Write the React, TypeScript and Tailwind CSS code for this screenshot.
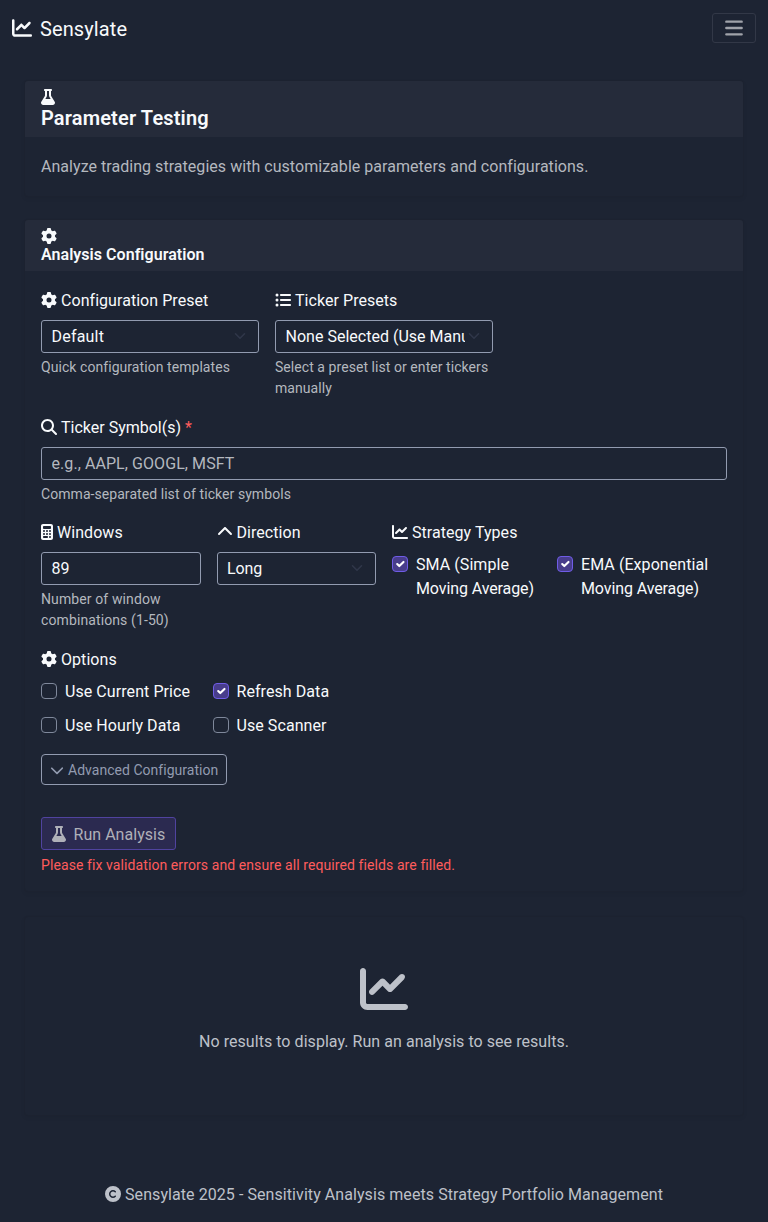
import type { ReactNode } from 'react';
import {
  FaCalculator,
  FaChartLine,
  FaChevronDown,
  FaChevronUp,
  FaCopyright,
  FaFlask,
  FaGear,
  FaListUl,
  FaMagnifyingGlass,
} from 'react-icons/fa6';

function Label({ icon, children }: { icon: ReactNode; children: ReactNode }) {
  return (
    <div className="mb-2 flex h-6 items-center gap-1 whitespace-nowrap">
      {icon}
      <span className="pt-0.5 tracking-[0.05px]">{children}</span>
    </div>
  );
}

function Hint({ children }: { children: ReactNode }) {
  return <p className="mt-1 text-sm leading-[21px] tracking-[0.06px] text-[#b4b8bf]">{children}</p>;
}

function Select({ children }: { children: ReactNode }) {
  return (
    <div className="flex h-[32.5px] items-center rounded-[3px] border border-[#929bb0] pr-3 pl-[9.5px]">
      <span className="min-w-0 flex-1 overflow-hidden leading-6 whitespace-nowrap">{children}</span>
      <svg viewBox="0 0 16 16" className="ml-[3px] size-3 shrink-0 fill-none stroke-[#30374a] stroke-2">
        <path d="m2 5 6 6 6-6" strokeLinecap="round" strokeLinejoin="round" />
      </svg>
    </div>
  );
}

function Check({ checked = false, children }: { checked?: boolean; children: ReactNode }) {
  return (
    <label className="flex gap-2">
      <span
        className={
          checked
            ? 'mt-[3.5px] flex size-4 shrink-0 items-center justify-center rounded-[4px] border border-[#6f5ce6] bg-[#483d8b]'
            : 'mt-[3.5px] size-4 shrink-0 rounded-[4px] border border-[#7f889b]'
        }
      >
        {checked && (
          <svg viewBox="0 0 20 20" className="size-3.5 shrink-0 fill-none stroke-white stroke-3">
            <path d="m6 10 3 3 6-6" strokeLinecap="round" strokeLinejoin="round" />
          </svg>
        )}
      </span>
      <span className="whitespace-nowrap">{children}</span>
    </label>
  );
}

function Card({ className, children }: { className: string; children: ReactNode }) {
  return (
    <section
      className={`mx-6 rounded-[4px] border border-[#1c2230] bg-[#1d2433] shadow-[0_2px_4px_rgba(0,0,0,0.05)] ${className}`}
    >
      {children}
    </section>
  );
}

export default function App() {
  return (
    <div className="flex h-[1222px] w-[768px] flex-col bg-[#1d2433] font-['Roboto',sans-serif] text-base leading-6 tracking-[0.07px] text-[#f8fafc]">
      <nav className="flex h-14 items-center justify-between px-3">
        <div className="flex items-center gap-2 text-xl leading-[30px] tracking-[0.1px]">
          <FaChartLine className="size-5" />
          <span className="pt-0.5">Sensylate</span>
        </div>
        <button className="flex h-[30px] w-11 items-center justify-center rounded-[3px] border border-[#323847]">
          <svg viewBox="0 0 30 30" className="size-5 fill-none stroke-[#a0a3aa] stroke-[3.6]">
            <path d="M3.5 5.5h23M3.5 15h23M3.5 24.5h23" strokeLinecap="round" />
          </svg>
        </button>
      </nav>

      <Card className="mt-6 h-[117px]">
        <header className="h-14 rounded-t-[3px] bg-[#252b3a] px-4 pt-2">
          <FaFlask className="h-4 w-3.5" />
          <h1 className="pt-px text-xl leading-6 font-semibold tracking-[0.15px]">Parameter Testing</h1>
        </header>
        <p className="mt-[18px] px-4 tracking-[0.04px] text-[#b4b8bf]">
          Analyze trading strategies with customizable parameters and configurations.
        </p>
      </Card>

      <Card className="mt-[22px] h-[673px]">
        <header className="h-[51px] rounded-t-[3px] bg-[#252b3a] px-4 pt-2">
          <FaGear className="size-4" />
          <h2 className="pt-px leading-5 font-semibold tracking-[0.04px]">Analysis Configuration</h2>
        </header>
        <div className="px-4 pt-[17px]">
          <div className="grid h-[127px] grid-cols-[218px_218px] items-start gap-4">
            <div>
              <Label icon={<FaGear className="size-4" />}>Configuration Preset</Label>
              <Select>
                <span className="block pt-0.5 tracking-[0.2px]">Default</span>
              </Select>
              <Hint>Quick configuration templates</Hint>
            </div>
            <div>
              <Label icon={<FaListUl className="size-4" />}>Ticker Presets</Label>
              <Select>
                <span className="block pt-0.5 tracking-[0.01px]">None Selected (Use Manual Entry)</span>
              </Select>
              <Hint>Select a preset list or enter tickers manually</Hint>
            </div>
          </div>

          <div className="h-[105px]">
            <Label icon={<FaMagnifyingGlass className="size-4" />}>
              <span className="tracking-normal">Ticker Symbol(s)</span> <span className="text-[#ff5c5c]">*</span>
            </Label>
            <input
              className="-mt-[0.5px] block h-[33px] w-full rounded-[3px] border border-[#929bb0] bg-transparent px-[9.5px] tracking-[0.07px] placeholder:text-[#b4b8bf]"
              placeholder="e.g., AAPL, GOOGL, MSFT"
            />
            <Hint>Comma-separated list of ticker symbols</Hint>
          </div>

          <div className="grid h-[127px] grid-cols-[159.5px_159.5px_335px] items-start gap-x-4">
            <div>
              <Label icon={<FaCalculator className="h-4 w-3" />}>Windows</Label>
              <div className="flex h-[32.5px] items-center rounded-[3px] border border-[#929bb0] px-[9.5px]">
                <span className="pt-px">89</span>
              </div>
              <p className="mt-1 text-sm leading-[21px] tracking-[0.11px] text-[#b4b8bf]">
                Number of window combinations (1-50)
              </p>
            </div>
            <div>
              <Label icon={<FaChevronUp className="size-4" />}>Direction</Label>
              <Select>
                <span className="block pt-px tracking-[-0.1px]">Long</span>
              </Select>
            </div>
            <div>
              <Label icon={<FaChartLine className="size-4" />}>Strategy Types</Label>
              <div className="grid grid-cols-[149px_155px] gap-4 pt-[0.5px]">
                <Check checked>
                  SMA (Simple
                  <br />
                  <span className="tracking-[-0.1px]">Moving Average)</span>
                </Check>
                <Check checked>
                  EMA (Exponential
                  <br />
                  <span className="tracking-[-0.1px]">Moving Average)</span>
                </Check>
              </div>
            </div>
          </div>

          <Label icon={<FaGear className="size-4" />}>Options</Label>
          <div className="grid grid-cols-[155.5px_160px] gap-x-4 gap-y-2.5 pt-[0.5px]">
            <Check>Use Current Price</Check>
            <Check checked>Refresh Data</Check>
            <Check>Use Hourly Data</Check>
            <Check>Use Scanner</Check>
          </div>

          <button className="mt-[16.5px] flex h-[31px] w-[186px] items-center gap-1 rounded-[4px] border border-[#929bb0] pl-2 text-sm tracking-[0.03px] whitespace-nowrap text-[#929bb0]">
            <FaChevronDown className="size-3.5" />
            Advanced Configuration
          </button>
          <button className="mt-8 flex h-[33px] w-[135px] items-center gap-2 rounded-[3px] border border-[#50439f] bg-[#2b2a50] pl-[9.5px] text-[#afb0b8]">
            <FaFlask className="h-4 w-3.5" />
            <span className="pt-0.5 tracking-[0.04px]">Run Analysis</span>
          </button>
          <p className="mt-[5px] text-sm leading-[21px] tracking-[0.09px] text-[#ff5c5c]">
            Please fix validation errors and ensure all required fields are filled.
          </p>
        </div>
      </Card>

      <Card className="mt-6 flex h-[200px] flex-col items-center pt-12 text-[#bdc1c9]">
        <FaChartLine className="size-12" />
        <p className="mt-[17px] tracking-[0.05px]">No results to display. Run an analysis to see results.</p>
      </Card>

      <footer className="mt-[65px] flex items-center justify-center gap-1 tracking-[0.07px] text-[#bdc1c9]">
        <FaCopyright className="size-4" />
        <span className="pt-0.5">Sensylate 2025 - Sensitivity Analysis meets Strategy Portfolio Management</span>
      </footer>
    </div>
  );
}
